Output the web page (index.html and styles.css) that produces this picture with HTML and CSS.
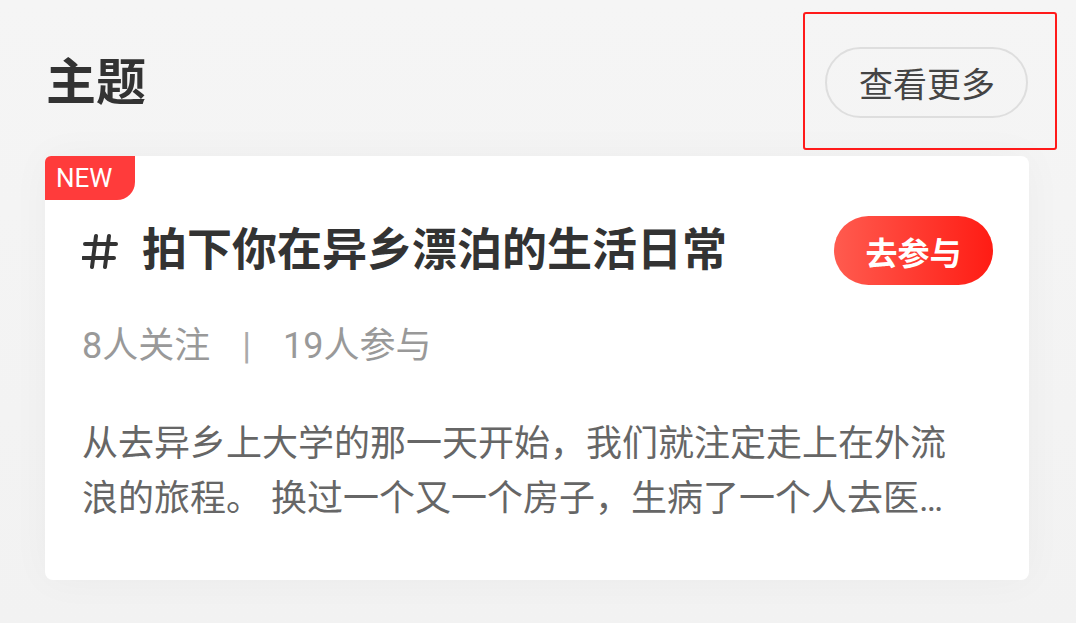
FILE: index.html
```html
<!DOCTYPE html>
<html lang="zh-CN">
<head>
  <meta charset="UTF-8" />
  <meta name="viewport" content="width=device-width, initial-scale=1.0"/>
  <title>主题</title>
  <link rel="stylesheet" href="styles.css">
</head>
<body>

  <!-- header -->
  <header class="topic-header">
    <h1>主题</h1>
    <a class="more-btn">查看更多</a>
  </header>

  <!-- topic card -->
  <section class="topic-card">
    <span class="new-tag">NEW</span>

    <div class="topic-title-row">
      <h2 class="topic-title">
        <svg class="hash-icon" viewBox="0 0 36 36" width="36" height="36">
          <path d="M3 11 H34 M1 25 H32 M14 3 L10 34 M27 3 L23 34" stroke="#333" stroke-width="4" stroke-linecap="round" fill="none"/>
        </svg>
        拍下你在异乡漂泊的生活日常
      </h2>
      <a class="join-btn">去参与</a>
    </div>

    <p class="topic-meta">8人关注<span class="sep">|</span>19人参与</p>

    <p class="topic-desc">从去异乡上大学的那一天开始，我们就注定走上在外流浪的旅程。 换过一个又一个房子，生病了一个人去医院，深夜加班后一个人回家。</p>
  </section>

  <div class="highlight-box"></div>

</body>
</html>
```

FILE: styles.css
```css
* {
  margin: 0;
  padding: 0;
  box-sizing: border-box;
  font-family: Roboto, "Noto Sans CJK SC", sans-serif;
}

body {
  width: 1076px;
  height: 623px;
  overflow: hidden;
  background: linear-gradient(180deg, #f5f5f5 0%, #f2f2f2 100%);
  padding: 47px 47px 0 45px;
  position: relative;
}

.topic-header {
  display: flex;
  justify-content: space-between;
  align-items: center;
  height: 71px;
  margin-bottom: 38px;
}

.topic-header h1 {
  font-size: 50px;
  font-weight: 700;
  color: #333;
  line-height: 1;
  margin-left: 1px;
}

.more-btn {
  display: flex;
  align-items: center;
  height: 71px;
  padding: 0 31px 0 32px;
  margin-right: 1px;
  border: 2px solid #dedede;
  border-radius: 36px;
  font-size: 34px;
  color: #444;
  cursor: pointer;
}

.topic-card {
  position: relative;
  background-color: #fff;
  border-radius: 8px;
  padding: 60px 36px 53px 37px;
  box-shadow: 0 0 40px rgba(0, 0, 0, 0.035);
}

.new-tag {
  position: absolute;
  top: 0;
  left: 0;
  width: 90px;
  height: 44px;
  display: flex;
  align-items: center;
  padding-left: 11px;
  background-color: #ff3b3b;
  color: #fff;
  font-size: 26px;
  border-radius: 6px 0 18px 0;
}

.topic-title-row {
  display: flex;
  justify-content: space-between;
  align-items: center;
  height: 69px;
}

.topic-title {
  display: flex;
  align-items: center;
  font-size: 45px;
  font-weight: 700;
  color: #333;
  line-height: 1;
}

.hash-icon {
  margin: 0 24px 0 0;
}

.join-btn {
  display: flex;
  align-items: center;
  justify-content: center;
  width: 159px;
  height: 69px;
  border-radius: 35px;
  background: linear-gradient(90deg, #ff5b4f 0%, #ff1c14 100%);
  color: #fff;
  font-size: 32px;
  font-weight: 700;
  cursor: pointer;
}

.topic-meta {
  margin-top: 37px;
  font-size: 36px;
  line-height: 48px;
  color: #999;
}

.topic-meta .sep {
  padding: 0 32px;
  color: #aaa;
}

.topic-desc {
  margin-top: 47px;
  max-width: 880px;
  font-size: 36px;
  line-height: 55px;
  color: #666;
  display: -webkit-box;
  -webkit-line-clamp: 2;
  -webkit-box-orient: vertical;
  overflow: hidden;
}

.highlight-box {
  position: absolute;
  left: 803px;
  top: 12px;
  width: 254px;
  height: 138px;
  border: 2.5px solid #ff1a1a;
  border-radius: 3px;
}
```
